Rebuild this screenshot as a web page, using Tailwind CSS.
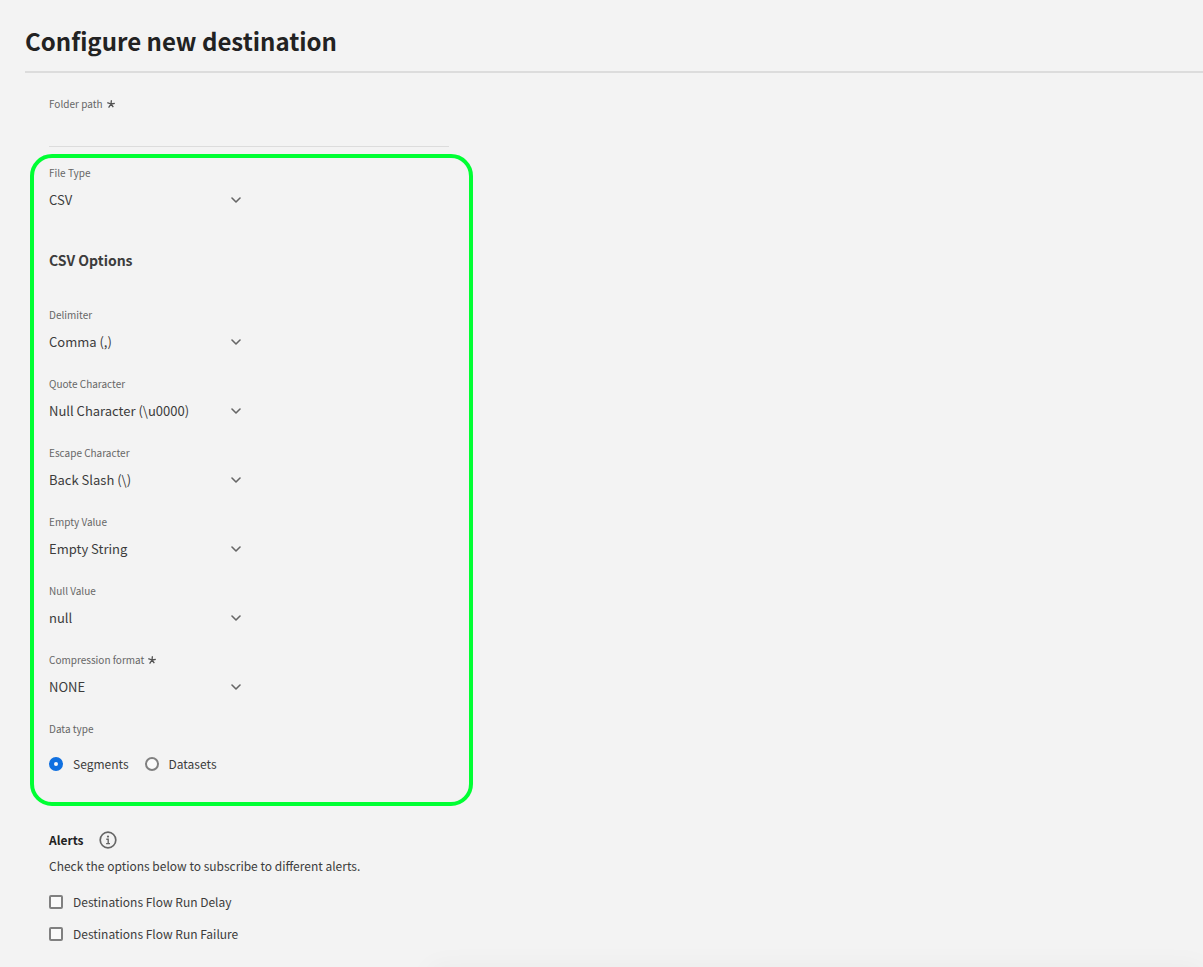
<!DOCTYPE html>
<html lang="en">

<head>
    <meta charset="UTF-8">
    <meta name="viewport" content="width=device-width, initial-scale=1.0">
    <title>Configure new destination</title>
    <script src="https://cdn.jsdelivr.net/npm/@tailwindcss/browser@4"></script>
</head>

<body class="min-h-screen overflow-x-hidden bg-[#f3f3f3] font-['Noto_Sans_CJK_JP','Open_Sans',sans-serif] text-[12px] text-[#3c3c3c]">
    <!-- Shared icons -->
    <svg class="hidden">
        <symbol id="chevron" viewBox="0 0 10 6">
            <path d="M1 1l4 4 4-4" fill="none" stroke="currentColor" stroke-width="1.6" stroke-linecap="round" stroke-linejoin="round" />
        </symbol>
        <symbol id="asterisk" viewBox="0 0 8 8">
            <path d="M4 4L4.4.2M4 4L.3 2.6M4 4l3.8-.6M4 4L1.6 7.6M4 4l2.3 3.2" fill="none" stroke="currentColor" stroke-width="1.3" />
        </symbol>
    </svg>

    <!-- Header -->
    <header class="ml-[25px] border-b-2 border-[#dcdcdc] pt-[23px] pb-3">
        <h1 class="text-[24px] leading-9 font-bold text-[#222222]">Configure new destination</h1>
    </header>

    <main class="px-[30px] pt-[23px] pb-[23px]">
        <!-- Folder path -->
        <div class="ml-[19px] flex max-w-[400px] flex-col gap-[3px]">
            <label for="folder-path" class="flex items-center gap-1 text-[10px] leading-4 text-[#666666]">Folder path
                <svg class="size-2 text-[#505050]"><use href="#asterisk" /></svg>
            </label>
            <input id="folder-path" type="text" required class="h-8 w-full border-b border-[#dcdcdc] bg-transparent outline-none">
        </div>

        <!-- File options -->
        <section class="mt-[7px] max-w-[443px] rounded-[22px] border-4 border-[#00ff33] px-[15px] pt-[7px] pb-7">
            <div class="flex w-48 flex-col gap-[3px]">
                <label for="file-type" class="text-[10px] leading-4 text-[#666666]">File Type</label>
                <div class="relative">
                    <select id="file-type" class="h-8 w-full appearance-none bg-transparent text-[13px] outline-none">
                        <option>CSV</option>
                    </select>
                    <svg class="pointer-events-none absolute top-[13px] right-0 h-1.5 w-2.5 text-[#666666]"><use href="#chevron" /></svg>
                </div>
            </div>

            <h2 class="mt-8 text-[14px] leading-6 font-bold">CSV Options</h2>

            <div class="mt-[35px] flex w-48 flex-col gap-[18px]">
                <div class="flex flex-col gap-[3px]">
                    <label for="delimiter" class="text-[10px] leading-4 text-[#666666]">Delimiter</label>
                    <div class="relative">
                        <select id="delimiter" class="h-8 w-full appearance-none bg-transparent text-[13px] outline-none">
                            <option>Comma (,)</option>
                        </select>
                        <svg class="pointer-events-none absolute top-[13px] right-0 h-1.5 w-2.5 text-[#666666]"><use href="#chevron" /></svg>
                    </div>
                </div>
                <div class="flex flex-col gap-[3px]">
                    <label for="quote-character" class="text-[10px] leading-4 text-[#666666]">Quote Character</label>
                    <div class="relative">
                        <select id="quote-character" class="h-8 w-full appearance-none bg-transparent text-[13px] outline-none">
                            <option>Null Character (\u0000)</option>
                        </select>
                        <svg class="pointer-events-none absolute top-[13px] right-0 h-1.5 w-2.5 text-[#666666]"><use href="#chevron" /></svg>
                    </div>
                </div>
                <div class="flex flex-col gap-[3px]">
                    <label for="escape-character" class="text-[10px] leading-4 text-[#666666]">Escape Character</label>
                    <div class="relative">
                        <select id="escape-character" class="h-8 w-full appearance-none bg-transparent text-[13px] outline-none">
                            <option>Back Slash (\)</option>
                        </select>
                        <svg class="pointer-events-none absolute top-[13px] right-0 h-1.5 w-2.5 text-[#666666]"><use href="#chevron" /></svg>
                    </div>
                </div>
                <div class="flex flex-col gap-[3px]">
                    <label for="empty-value" class="text-[10px] leading-4 text-[#666666]">Empty Value</label>
                    <div class="relative">
                        <select id="empty-value" class="h-8 w-full appearance-none bg-transparent text-[13px] outline-none">
                            <option>Empty String</option>
                        </select>
                        <svg class="pointer-events-none absolute top-[13px] right-0 h-1.5 w-2.5 text-[#666666]"><use href="#chevron" /></svg>
                    </div>
                </div>
                <div class="flex flex-col gap-[3px]">
                    <label for="null-value" class="text-[10px] leading-4 text-[#666666]">Null Value</label>
                    <div class="relative">
                        <select id="null-value" class="h-8 w-full appearance-none bg-transparent text-[13px] outline-none">
                            <option>null</option>
                        </select>
                        <svg class="pointer-events-none absolute top-[13px] right-0 h-1.5 w-2.5 text-[#666666]"><use href="#chevron" /></svg>
                    </div>
                </div>
                <div class="flex flex-col gap-[3px]">
                    <label for="compression" class="flex items-center gap-1 text-[10px] leading-4 text-[#666666]">Compression format
                        <svg class="size-2 text-[#505050]"><use href="#asterisk" /></svg>
                    </label>
                    <div class="relative">
                        <select id="compression" required class="h-8 w-full appearance-none bg-transparent text-[13px] outline-none">
                            <option>NONE</option>
                        </select>
                        <svg class="pointer-events-none absolute top-[13px] right-0 h-1.5 w-2.5 text-[#666666]"><use href="#chevron" /></svg>
                    </div>
                </div>
            </div>

            <!-- Data type -->
            <fieldset class="mt-[18px]">
                <legend class="text-[10px] leading-4 text-[#666666]">Data type</legend>
                <div class="mt-[17px] flex gap-4 leading-5">
                    <label class="flex items-center gap-2.5">
                        <input type="radio" name="data-type" checked class="size-3.5 appearance-none rounded-full border-2 border-[#808080] bg-[#fafafa] checked:border-5 checked:border-[#1070e0]">
                        Segments
                    </label>
                    <label class="flex items-center gap-2.5">
                        <input type="radio" name="data-type" class="size-3.5 appearance-none rounded-full border-2 border-[#808080] bg-[#fafafa] checked:border-5 checked:border-[#1070e0]">
                        Datasets
                    </label>
                </div>
            </fieldset>
        </section>

        <!-- Alerts -->
        <section class="mt-6 ml-[19px] leading-5">
            <div class="flex items-center gap-[15px]">
                <h2 class="font-bold text-[#222222]">Alerts</h2>
                <button type="button" aria-label="About alerts" class="text-[#666666]">
                    <svg class="size-[18px]" viewBox="0 0 18 18" fill="none" stroke="currentColor">
                        <circle cx="9" cy="9" r="7.8" stroke-width="1.7" />
                        <circle cx="9" cy="5.6" r="1.1" fill="currentColor" stroke="none" />
                        <path d="M7.3 8.2H9.2V12.5M7.1 12.6H11" stroke-width="1.4" />
                    </svg>
                </button>
            </div>
            <p class="mt-1.5">Check the options below to subscribe to different alerts.</p>
            <div class="mt-4 flex flex-col items-start gap-3">
                <label class="flex items-center gap-2.5">
                    <input type="checkbox" class="size-3.5 appearance-none rounded-xs border-2 border-[#808080] bg-[#fafafa] checked:bg-[#1070e0]">
                    Destinations Flow Run Delay
                </label>
                <label class="flex items-center gap-2.5">
                    <input type="checkbox" class="size-3.5 appearance-none rounded-xs border-2 border-[#808080] bg-[#fafafa] checked:bg-[#1070e0]">
                    Destinations Flow Run Failure
                </label>
            </div>
        </section>
    </main>

    <!-- Soft shadow along the bottom edge -->
    <div class="pointer-events-none fixed top-full right-0 left-[430px] h-10 shadow-[0_0_28px_rgba(0,0,0,0.04)]"></div>
</body>

</html>
